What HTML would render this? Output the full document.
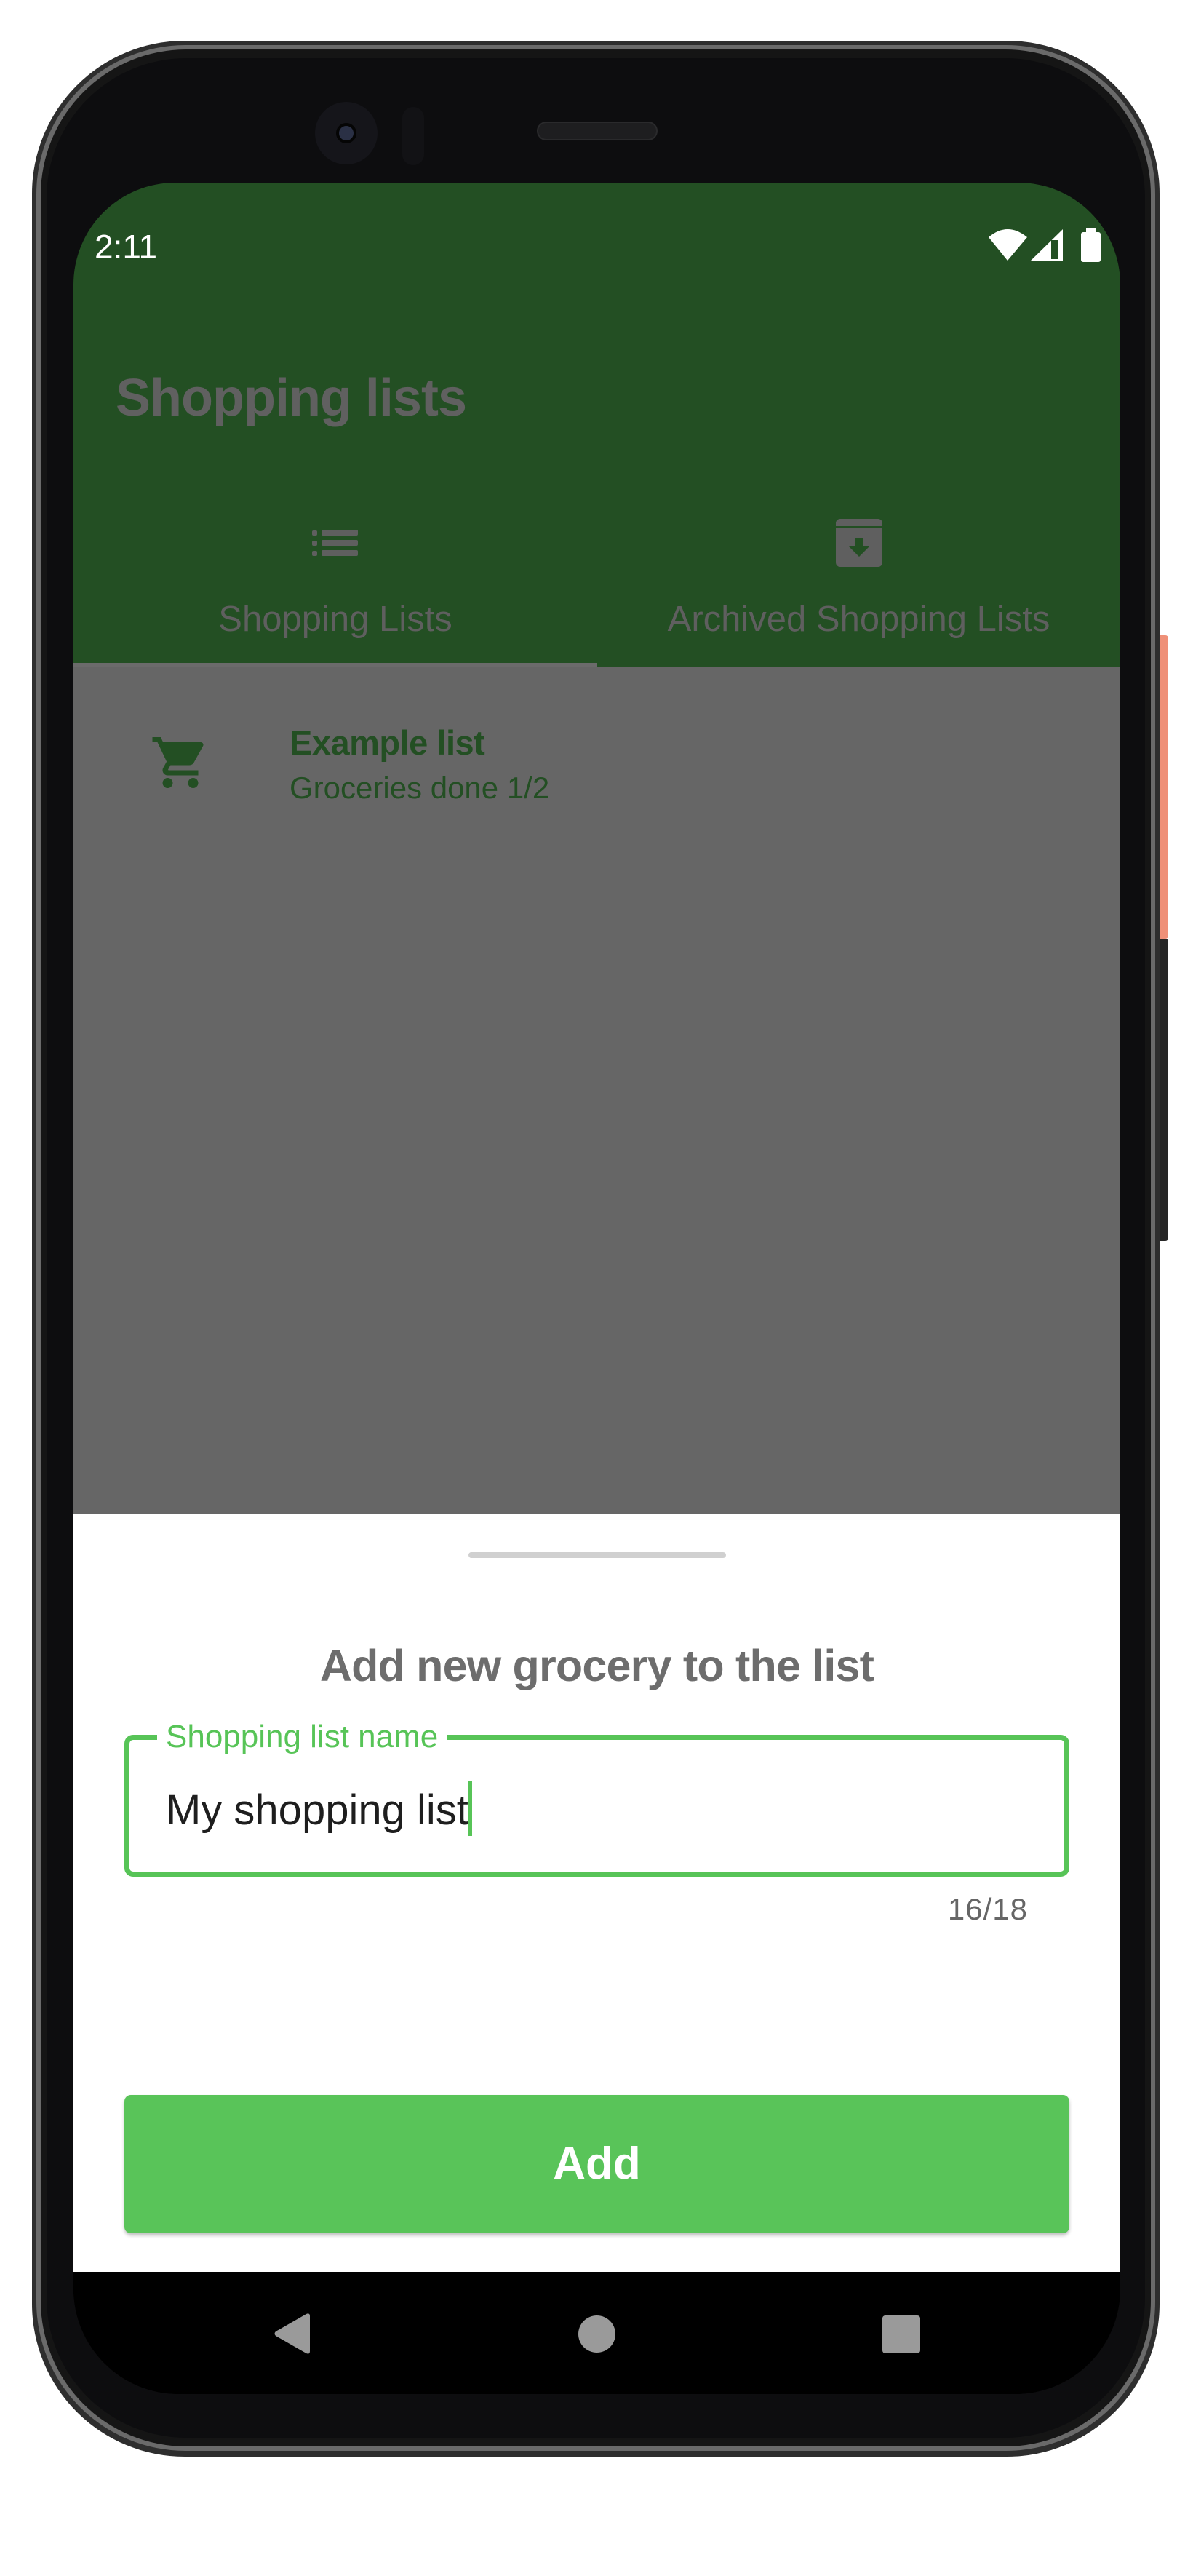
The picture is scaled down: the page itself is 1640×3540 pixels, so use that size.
<!DOCTYPE html>
<html><head><meta charset="utf-8">
<style>
*{margin:0;padding:0;box-sizing:border-box}
html,body{width:1640px;height:3540px;background:#fff;overflow:hidden;font-family:"Liberation Sans",sans-serif}
.abs{position:absolute;white-space:nowrap}
</style></head><body>
<!-- side buttons -->
<div class="abs" style="left:1586px;top:873px;width:20px;height:417px;background:#ef9078;border-radius:0 4px 4px 0"></div>
<div class="abs" style="left:1586px;top:1290px;width:20px;height:415px;background:#262626;border-radius:0 4px 4px 0"></div>
<!-- phone body -->
<div class="abs" style="left:44px;top:56px;width:1550px;height:3320px;background:#2e2e2e;border-radius:210px"></div>
<div class="abs" style="left:50px;top:62px;width:1538px;height:3306px;background:#6a6a6a;border-radius:205px"></div>
<div class="abs" style="left:56px;top:68px;width:1526px;height:3294px;background:#151515;border-radius:200px"></div>
<div class="abs" style="left:64px;top:80px;width:1510px;height:3270px;background:#0d0d0f;border-radius:192px"></div>
<!-- camera & speaker -->
<div class="abs" style="left:433px;top:140px;width:86px;height:86px;border-radius:50%;background:#15151a"></div>
<div class="abs" style="left:462px;top:169px;width:28px;height:28px;border-radius:50%;background:#2a3045;border:4px solid #050505"></div>
<div class="abs" style="left:553px;top:147px;width:30px;height:80px;border-radius:15px;background:#121215"></div>
<div class="abs" style="left:738px;top:167px;width:166px;height:26px;border-radius:13px;background:#1e1e20;border:2px solid #2a2a2c"></div>
<!-- screen -->
<div class="abs" style="left:101px;top:251px;width:1439px;height:3039px;border-radius:140px 140px 145px 145px;overflow:hidden;background:#000">
  <div class="abs" style="left:0;top:0;width:1439px;height:666px;background:#234f23"></div>
  <div class="abs" style="left:29px;top:61px;color:#fff;font-size:46px">2:11</div>
  <svg class="abs" style="left:1258px;top:63px" width="160" height="46" viewBox="0 0 160 46">
    <path d="M0 12 Q26 -10 53 12 L26 44 Z" fill="#fff"/>
    <path d="M58 44 L102 1 L102 44 Z" fill="#fff"/>
    <rect x="86" y="16" width="10" height="26" fill="#234f23"/>
    <rect x="127" y="5" width="27" height="41" rx="3" fill="#fff"/>
    <rect x="134" y="0" width="13" height="6" fill="#fff"/>
  </svg>
  <div class="abs" style="left:58px;top:255px;color:#606060;font-size:72px;font-weight:bold;letter-spacing:-1px">Shopping lists</div>
  <!-- tab icons -->
  <svg class="abs" style="left:328px;top:476px" width="64" height="40" viewBox="0 0 64 40">
    <g fill="#5f5f5f"><rect x="0" y="2" width="7" height="7" rx="2"/><rect x="0" y="16" width="7" height="7" rx="2"/><rect x="0" y="30" width="7" height="7" rx="2"/>
    <rect x="13" y="1" width="50" height="8" rx="2"/><rect x="13" y="15" width="50" height="8" rx="2"/><rect x="13" y="29" width="50" height="8" rx="2"/></g>
  </svg>
  <svg class="abs" style="left:1048px;top:462px" width="64" height="66" viewBox="0 0 64 66">
    <rect x="0" y="0" width="64" height="66" rx="6" fill="#5f5f5f"/>
    <rect x="0" y="10" width="64" height="3" fill="#234f23"/>
    <path d="M26 27 H38 V38 H46 L32 52 L18 38 H26 Z" fill="#234f23"/>
  </svg>
  <div class="abs" style="left:0;top:572px;width:720px;text-align:center;color:#5f5f5f;font-size:49px">Shopping Lists</div>
  <div class="abs" style="left:720px;top:572px;width:719px;text-align:center;color:#5f5f5f;font-size:49px">Archived Shopping Lists</div>
  <div class="abs" style="left:0;top:660px;width:720px;height:6px;background:#6b6b6b"></div>
  <!-- scrim content -->
  <div class="abs" style="left:0;top:666px;width:1439px;height:1163px;background:#666"></div>
  <svg class="abs" style="left:105px;top:755px" width="84" height="84" viewBox="0 0 24 24">
    <path fill="#234f23" d="M7 18c-1.1 0-1.990.9-1.99 2S5.9 22 7 22s2-.9 2-2-.9-2-2-2zM1 2v2h2l3.6 7.59-1.35 2.45c-.16.28-.25.61-.25.96 0 1.1.9 2 2 2h12v-2H7.42c-.14 0-.25-.11-.25-.25l.03-.12.9-1.630h7.45c.75 0 1.41-.41 1.75-1.03l3.58-6.49A1.003 1.003 0 0020 4H5.21l-.94-2H1zm16 16c-1.1 0-1.99.9-1.99 2s.89 2 1.99 2 2-.9 2-2-.9-2-2-2z"/>
  </svg>
  <div class="abs" style="left:297px;top:742px;color:#234f23;font-size:47px;font-weight:bold;letter-spacing:-0.5px">Example list</div>
  <div class="abs" style="left:297px;top:808px;color:#234f23;font-size:42px">Groceries done 1/2</div>
  <!-- sheet -->
  <div class="abs" style="left:0;top:1829px;width:1439px;height:1042px;background:#fff"></div>
  <div class="abs" style="left:543px;top:1882px;width:354px;height:8px;border-radius:4px;background:#d0d0d0"></div>
  <div class="abs" style="left:0;top:2003px;width:1439px;text-align:center;color:#6d6d6d;font-size:61px;font-weight:bold;letter-spacing:-0.8px">Add new grocery to the list</div>
  <div class="abs" style="left:70px;top:2133px;width:1299px;height:195px;border:7px solid #57c457;border-radius:12px"></div>
  <div class="abs" style="left:115px;top:2111px;padding:0 12px;background:#fff;color:#57c457;font-size:44px">Shopping list name</div>
  <div class="abs" style="left:127px;top:2196px;color:#1e1e1e;font-size:58px">My shopping list<span style="display:inline-block;width:5px;height:76px;background:#57c457;vertical-align:-16px"></span></div>
  <div class="abs" style="left:1000px;top:2349px;width:312px;text-align:right;color:#666;font-size:42px;letter-spacing:1px">16/18</div>
  <div class="abs" style="left:70px;top:2628px;width:1299px;height:190px;background:#59c459;border-radius:9px;box-shadow:0 3px 5px rgba(0,0,0,0.25);color:#fff;font-size:62px;font-weight:bold;text-align:center;line-height:190px">Add</div>
  <!-- nav -->
  <div class="abs" style="left:0;top:2871px;width:1439px;height:168px;background:#000"></div>
  <svg class="abs" style="left:276px;top:2928px" width="50" height="56" viewBox="0 0 50 56"><path d="M2 25 L44 1 Q49 -1 49 4 V52 Q49 57 44 55 L2 31 Q-1 28 2 25 Z" fill="#9a9a9a"/></svg>
  <div class="abs" style="left:694px;top:2931px;width:51px;height:51px;border-radius:50%;background:#9a9a9a"></div>
  <div class="abs" style="left:1112px;top:2931px;width:52px;height:52px;border-radius:4px;background:#9a9a9a"></div>
</div>
</body></html>
